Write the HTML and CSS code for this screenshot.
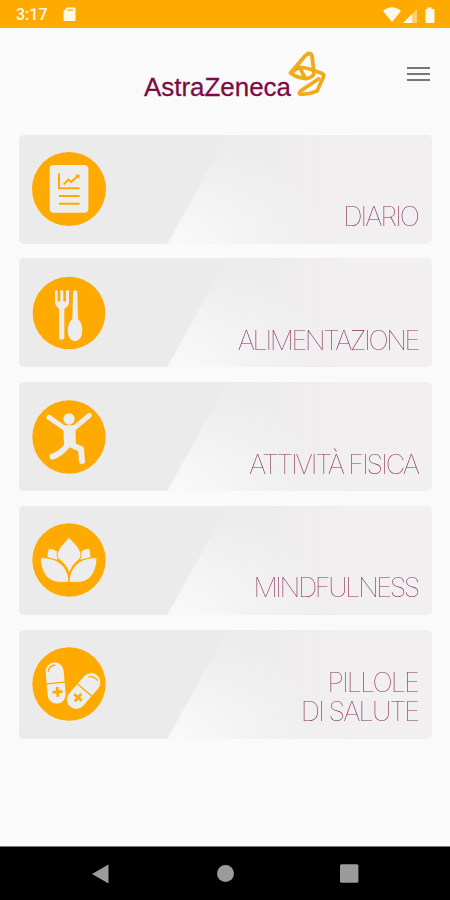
FILE: index.html
```html
<!DOCTYPE html>
<html lang="it">
<head>
  <meta charset="utf-8">
  <title>AstraZeneca</title>
  <link rel="stylesheet" href="styles.css">
</head>
<body>

  <div class="status-bar">
    <span class="time">3:17</span>
    <svg class="sd" viewBox="0 0 13 15"><path fill-rule="evenodd" d="M4 0.5H11.5Q12.5 0.5 12.5 1.5V13Q12.5 14 11.5 14H1.5Q.5 14 .5 13V4ZM4.500 2.400V3.800H10V2.400Z"/></svg>
    <svg class="signals" viewBox="0 0 54 18">
      <path d="M0 5Q9-2.500 18 5L9 16Z"/>
      <path d="M34 3V17H20Z" opacity=".5"/>
      <path d="M29 8V17H20Z"/>
      <path d="M44.500 3V1.500H48.500V3H50.500Q51.500 3 51.500 4V16Q51.500 17 50.500 17H43.500Q42.500 17 42.500 16V4Q42.500 3 43.500 3Z"/>
    </svg>
  </div>

  <header class="header">
    <svg class="logo" viewBox="0 0 190 60">
      <text x="4" y="47.500" textLength="147" lengthAdjust="spacingAndGlyphs">AstraZeneca</text>
      <path class="mark" d="M150.500 25L165 8Q170 3 172 8L174 25Q173 30 166 30.500Q157 30 150.500 25ZM152 24L159 19.500Q163 18 182 25.500Q185 27 183 30L177 43Q168 47 160 46Q158 45 162 42L180 30M160 20L165 30"/>
    </svg>
    <div class="menu">
      <span></span>
      <span></span>
      <span></span>
    </div>
  </header>

  <main class="cards">
    <div class="card">
      <svg class="icon" viewBox="67 82 222 222">
        <circle cx="178" cy="193" r="111"/>
        <rect class="light" x="120" y="121" width="116" height="143" rx="11"/>
        <path class="line" d="M148 146V191H210M148 214H210M148 237H210M162 180L176 165L185 172L203 155"/>
        <path d="M197 151L210 149L208 163Z"/>
      </svg>
      <div class="label diario">DIARIO</div>
    </div>

    <div class="card">
      <svg class="icon" viewBox="36 33 222 222">
        <circle cx="147" cy="144" r="109"/>
        <path class="light" d="M105 78Q109 72 113 78V107Q117 113 121 107V78Q125 72 130 78V107Q134 113 138 107V78Q143 72 147 78V112Q146 125 133 131V217Q133 224 125 224Q117 224 117 217V131Q106 124 105 112Z"/>
        <path class="light" d="M159 83Q159 76 165.500 76Q172 76 172 83L174 162Q187 172 187 195Q186 227 165 229Q144 227 143 195Q144 172 157 162Z"/>
      </svg>
      <div class="label alimentazione">ALIMENTAZIONE</div>
    </div>

    <div class="card">
      <svg class="icon" viewBox="37 30 222 222">
        <circle cx="148" cy="141" r="110"/>
        <circle class="light" cx="148" cy="87" r="17"/>
        <path class="light" d="M131 106H167L169 166H133Z"/>
        <path class="limb" d="M88 82L138 117M209 76L160 117"/>
        <path class="limb leg" d="M98 200Q124 192 143 166M158 166L184 177L187 213"/>
      </svg>
      <div class="label attivita">ATTIVITÀ FISICA</div>
    </div>

    <div class="card">
      <svg class="icon" viewBox="37 41 222 222">
        <circle cx="148" cy="152" r="110"/>
        <path class="light" d="M87 118Q101 118 114 128V151L83 144ZM209 118Q195 118 182 128V151L213 144Z"/>
        <path class="petal" d="M148 84C161 99 183 116 184 136Q184 147 176 153Q155 169 149 194Q142 169 121 153Q112 147 112 136C114 116 136 99 148 84Z"/>
        <path class="petal" d="M62 145C118 143 147 175 148 219H118C82 218 62 184 62 145ZM232 145C178 143 149 175 148 219H178C213 218 232 184 232 145Z"/>
      </svg>
      <div class="label mindfulness">MINDFULNESS</div>
    </div>

    <div class="card">
      <svg class="icon" viewBox="37 38 222 222">
        <circle cx="148" cy="149" r="110"/>
        <g transform="translate(108 146) rotate(-5)">
          <rect class="light" x="-27" y="-62" width="54" height="124" rx="27"/>
          <path class="line thin" d="M-28 0H28M-19-36Q-16-53 3-54"/>
          <path class="line cross" d="M-12 27H18M3 12V42"/>
        </g>
        <g transform="translate(192 170) rotate(41)">
          <rect class="light" x="-28" y="-62" width="56" height="124" rx="28"/>
          <path class="line thin" d="M-29-4H29M-17-41Q-8-54 11-51"/>
          <path class="line cross" d="M-15 26H15M0 11V41"/>
        </g>
      </svg>
      <div class="label pillole">PILLOLE<br>DI SALUTE</div>
    </div>
  </main>

  <nav class="nav-bar">
    <svg viewBox="0 0 20 20"><path d="M2 10L18.500 .5V19.500Z"/></svg>
    <svg viewBox="0 0 20 20"><circle cx="10.500" cy="9.500" r="8.500"/></svg>
    <svg viewBox="0 0 20 20"><rect x="1" y=".3" width="18.400" height="18.400" rx="1.500"/></svg>
  </nav>

</body>
</html>
```

FILE: styles.css
```css
* {
  box-sizing: border-box;
}
body {
  margin: 0;
  height: 900px;
  display: flex;
  flex-direction: column;
  background: #fafafa;
  font-family: Roboto, "Liberation Sans", sans-serif;
  overflow: hidden;
}
svg {
  display: block;
}

.status-bar {
  height: 28px;
  padding: 1px 13px 0 16px;
  display: flex;
  align-items: center;
  background: #ffaa00;
  color: #fff8e8;
}
.status-bar svg {
  fill: #fff8e8;
}
.time {
  width: 47px;
  font-size: 16px;
  font-weight: 500;
}
.sd {
  width: 13px;
  height: 15px;
}
.signals {
  width: 54px;
  height: 18px;
  margin-left: auto;
}

.header {
  height: 106.5px;
  padding: 20px 20px 0 140px;
  display: flex;
  align-items: flex-start;
  justify-content: space-between;
}
.logo {
  width: 190px;
  height: 60px;
}
.logo text {
  font-family: "Liberation Sans", Arial, sans-serif;
  font-size: 26px;
  fill: #7d0c45;
  stroke: #7d0c45;
  stroke-width: 0.3;
}
.mark {
  fill: none;
  stroke: #efab18;
  stroke-width: 3.8;
  stroke-linejoin: round;
}
.menu {
  width: 23px;
  padding-top: 19px;
  display: flex;
  flex-direction: column;
  gap: 4px;
}
.menu span {
  height: 2px;
  background: #777;
}

.cards {
  flex: 1;
  padding: 0 18px 0 19px;
  display: flex;
  flex-direction: column;
  gap: 14.75px;
}
.card {
  height: 109px;
  padding: 0 13px;
  display: flex;
  align-items: center;
  justify-content: space-between;
  border-radius: 5px;
  /* grey wedge on the left, light corner fading to the right */
  background:
    linear-gradient(119deg, #ebebeb 182px, transparent 183px),
    radial-gradient(ellipse 145px 108px at 160px 109px, #f9f9f9 0%, #f6f6f6 25%, transparent 100%),
    linear-gradient(to right, #ebebeb 45%, #f1efef 80%);
}
.icon {
  width: 74px;
  height: 74px;
  flex: none;
  fill: #ffaa00;
}
.light {
  fill: #ededed;
}
.line {
  fill: none;
  stroke: #ffaa00;
  stroke-width: 6;
}
.thin {
  stroke-width: 4;
}
.cross {
  stroke-width: 8;
}
.limb {
  fill: none;
  stroke: #ededed;
  stroke-width: 15;
  stroke-linecap: round;
  stroke-linejoin: round;
}
.leg {
  stroke-width: 18;
}
.petal {
  fill: #ededed;
  stroke: #ffaa00;
  stroke-width: 3;
}

.label {
  align-self: flex-end;
  padding: 0 1px 12.5px 0;
  font-family: Inter, Roboto, sans-serif;
  font-size: 27px;
  font-weight: 100;
  line-height: 29px;
  text-align: right;
  white-space: nowrap;
  color: #7d1845;
  opacity: 0.95;
  will-change: opacity;
}
.diario {
  letter-spacing: -2px;
}
.alimentazione {
  letter-spacing: -2.4px;
}
.attivita {
  letter-spacing: -2.1px;
}
.mindfulness {
  letter-spacing: -2.4px;
}
.pillole {
  letter-spacing: -1.9px;
}

.nav-bar {
  height: 54px;
  padding: 0 91px 0 90px;
  display: flex;
  align-items: center;
  justify-content: space-between;
  background: #000;
  border-top: 1px solid #777;
}
.nav-bar svg {
  width: 20px;
  height: 20px;
  fill: #9b9b9b;
}
```
